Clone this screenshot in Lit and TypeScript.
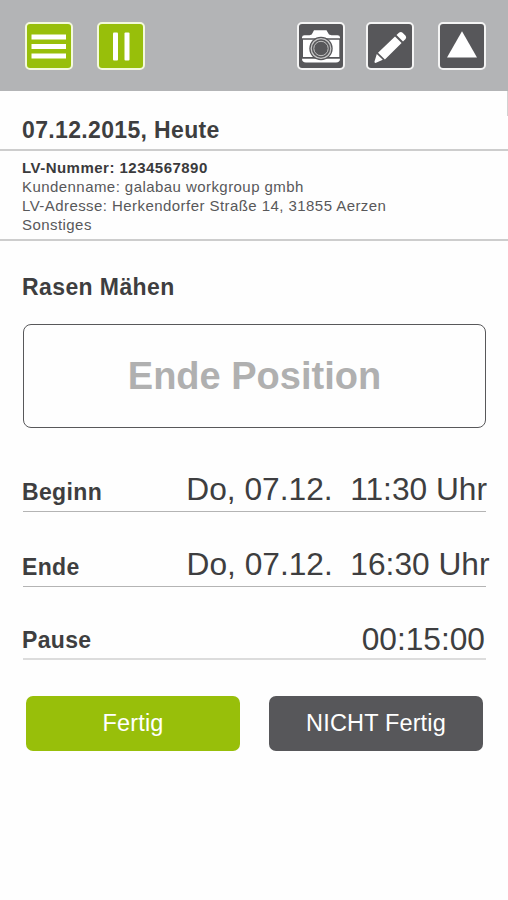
import { LitElement, html, css, svg } from "lit";
import { customElement, property } from "lit/decorators.js";

const icons = {
  menu: svg`<path fill="#fff" d="M6.500 12.500h34.500v5H6.500zM6.500 22h34.500v5H6.500zM6.500 31.500h34.500v5H6.500z"/>`,
  pause: svg`<g fill="#fff"><rect x="16" y="10.500" width="5" height="28" rx="1"/><rect x="27.500" y="10.500" width="5" height="28" rx="1"/></g>`,
  camera: svg`
    <path fill="#fff" d="M5 15.500q0-2.300 2.500-2.300h5l2.200-.8 2.300-4.100h12.500l2.500 4.100 2.500.8h6q2.500 0 2.500 2.300v.7H5zM6 17.700h36.300v17.300H6zM5 36.700h38q0 3.800-4 3.800H9q-4 0-4-3.800z"/>
    <circle cx="24" cy="26.500" r="11.700" fill="#57575a"/>
    <circle cx="24" cy="26.500" r="9.800" fill="#57575a" stroke="#c8c8c8" stroke-width="1.300"/>
    <circle cx="24" cy="26.500" r="7.200" fill="#57575a" stroke="#c4c4c4" stroke-width="1"/>`,
  pencil: svg`<path fill="#fff" d="M30.500 13l2.700-2.500q1.800-1.300 3.400.2l3 3q1.200 1.600 0 3.200l-2.600 2.700zM29 14.500l6.600 6.600-16.700 16.300-6.900-6.700zM10.800 32l6 5.700-7.300 3.300q-1.300-.2-1-1.400z"/>`,
  up: svg`<path fill="#fff" d="M24 9.200l15 26.300H9z"/>`,
};

@customElement("tool-button")
class ToolButton extends LitElement {
  @property() icon: keyof typeof icons = "menu";
  @property({ reflect: true }) tone = "dark";

  static styles = css`
    :host { display: block; width: 48px; height: 48px; }
    .tile {
      box-sizing: border-box; width: 48px; height: 48px; padding: 0; margin: 0;
      border: 2px solid #f4f4f4; border-radius: 5px; background: #57575a; display: block;
    }
    :host([tone="green"]) .tile { background: #98bf0a; border-color: #f3f9dc; }
    .glyph { display: block; width: 48px; height: 48px; margin: -2px; }
  `;

  render() {
    return html`<button class="tile" aria-label=${this.icon}>
      <svg class="glyph" viewBox="0 0 48 48">${icons[this.icon]}</svg>
    </button>`;
  }
}

const rows = [
  { label: "Beginn", value: "Do, 07.12.  11:30 Uhr", kind: "begin" },
  { label: "Ende", value: "Do, 07.12.  16:30 Uhr", kind: "end" },
  { label: "Pause", value: "00:15:00", kind: "break" },
];

@customElement("app-root")
class AppRoot extends LitElement {
  static styles = css`
    :host {
      display: block; width: 508px; height: 900px; overflow: hidden;
      background: #fefefe; color: #3e3e40;
      font-family: "Liberation Sans", Arial, sans-serif;
    }
    .bar {
      box-sizing: border-box; height: 90.500px; padding: 21.500px 22.500px 0 24.500px;
      background: #b3b4b6; display: flex; justify-content: space-between;
    }
    .group { display: flex; }
    .left { gap: 24.500px; }
    .pencil { margin-left: 20.500px; }
    .up { margin-left: 24px; }
    .date {
      box-sizing: border-box; height: 60.500px; padding: 26.500px 22px 0; margin: 0;
      border-bottom: 2px solid #cdcdcd;
      font-size: 23px; line-height: 26px; font-weight: bold; letter-spacing: 0.350px;
      position: relative;
    }
    .scroll { position: absolute; right: 0; top: 0; width: 1px; height: 25px; background: #d2d2d2; }
    .info {
      box-sizing: border-box; height: 90px; padding: 7px 22px 0;
      border-bottom: 2px solid #cdcdcd;
      font-size: 15px; line-height: 19px; letter-spacing: 0.440px; color: #58585a;
    }
    .strong { font-weight: bold; color: #3a3a3c; letter-spacing: 0.480px; }
    .content { padding: 0 22px; }
    .task { margin: 33px 0 0; height: 50px; font-size: 23px; line-height: 26px; letter-spacing: 0.400px; }
    .finish {
      box-sizing: border-box; display: block; width: 463px; height: 104px; margin: 0 0 0 1px; padding: 0;
      border: 1.500px solid #58585a; border-radius: 8px; background: #fefefe;
      color: #b0b0b0; font: bold 38px/44px "Liberation Sans", Arial, sans-serif;
    }
    .row {
      box-sizing: border-box; width: 463px; margin-left: 1px; height: 75px;
      border-bottom: 1px solid #b4b4b4;
      display: flex; align-items: flex-end; justify-content: space-between;
    }
    .begin { height: 84px; }
    .break { height: 73px; border-bottom: 2px solid #dcdcdc; }
    .label { font-size: 23px; line-height: 26px; font-weight: bold; letter-spacing: 0.350px; margin: 0 0 6px -1px; }
    .value { font-size: 31.700px; line-height: 36px; white-space: pre; margin-bottom: 4px; }
    .begin .value { margin-right: -1px; }
    .end .value { margin-right: -3.500px; }
    .break .value { margin-right: 1px; margin-bottom: 1px; }
    .break .label { margin-bottom: 5px; }
    .actions { display: flex; gap: 29px; padding: 36px 0 0 4px; }
    .action {
      width: 214px; height: 55px; padding: 0; border: 0; border-radius: 7px; color: #fff;
      font: 23.500px/27px "Liberation Sans", Arial, sans-serif; letter-spacing: 0.150px;
    }
    .done { background: #98bf0a; }
    .open { background: #57575a; }
  `;

  render() {
    return html`
      <header class="bar">
        <div class="group left">
          <tool-button icon="menu" tone="green"></tool-button>
          <tool-button icon="pause" tone="green"></tool-button>
        </div>
        <div class="group">
          <tool-button icon="camera"></tool-button>
          <tool-button class="pencil" icon="pencil"></tool-button>
          <tool-button class="up" icon="up"></tool-button>
        </div>
      </header>
      <h1 class="date">07.12.2015, Heute<span class="scroll"></span></h1>
      <section class="info">
        <div class="strong">LV-Nummer: 1234567890</div>
        <div>Kundenname: galabau workgroup gmbh</div>
        <div>LV-Adresse: Herkendorfer Straße 14, 31855 Aerzen</div>
        <div>Sonstiges</div>
      </section>
      <main class="content">
        <h2 class="task">Rasen Mähen</h2>
        <button class="finish">Ende Position</button>
        ${rows.map(
          (r) => html`<div class="row ${r.kind}"><span class="label">${r.label}</span><span class="value">${r.value}</span></div>`
        )}
        <div class="actions">
          <button class="action done">Fertig</button>
          <button class="action open">NICHT Fertig</button>
        </div>
      </main>
    `;
  }
}
